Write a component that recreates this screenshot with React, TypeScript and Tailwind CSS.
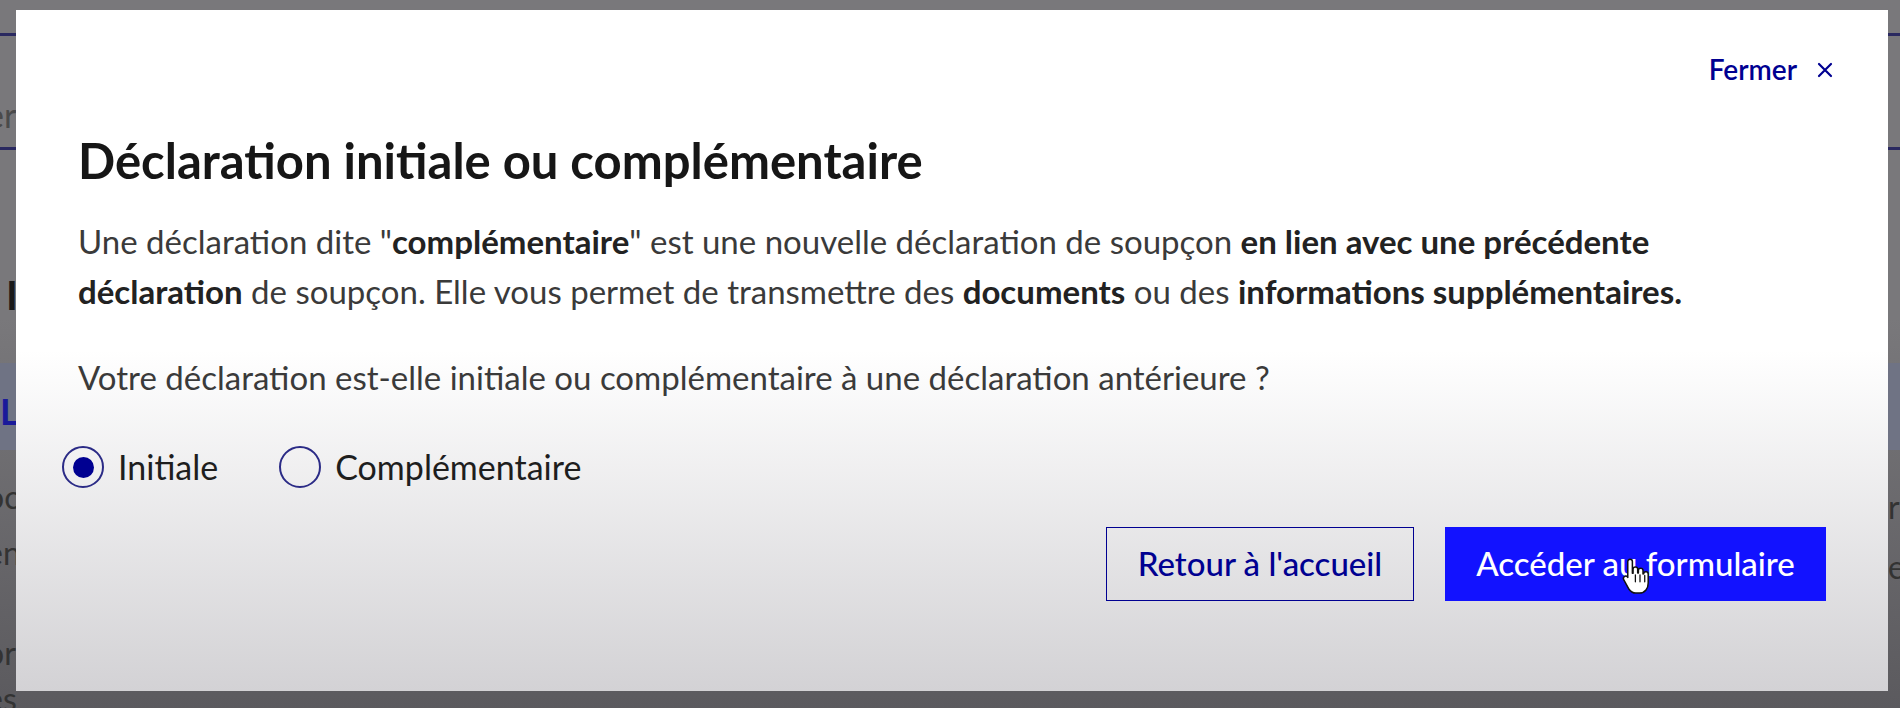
import { useState } from "react";

function HandCursor() {
  return (
    <svg width="30" height="40" viewBox="0 0 26 34" className="pointer-events-none absolute left-[1622px] top-[556px]">
      <path
        d="M7 2.5c1.2 0 2 .9 2 2v10.2l.6-.1V11c0-1.1.9-1.9 2-1.9s2 .8 2 1.9v3.5l.6-.1v-2.2c0-1.1.9-1.9 2-1.9s2 .8 2 1.9v3l.6-.1c0-1 .9-1.8 1.9-1.8s2 .8 2 1.9v7.8c0 4.6-2.6 8.8-7.6 8.8h-3.2c-2.6 0-4.4-1.2-5.8-3.3L1.6 20.3c-.6-1-.4-2.2.5-2.8.9-.6 2.1-.4 2.8.5l.1.2V4.5c0-1.1.8-2 2-2z"
        fill="#fff"
        stroke="#111"
        strokeWidth="1.3"
        strokeLinejoin="round"
      />
      <path d="M11.6 16v6M15.6 16v6M19.7 16.5v5.5" stroke="#111" strokeWidth="1.1" strokeLinecap="round" />
    </svg>
  );
}

function Radio({ checked, label, onClick }: { checked: boolean; label: string; onClick: () => void }) {
  return (
    <label className="flex cursor-pointer items-center gap-[14px]" onClick={onClick}>
      <span className="flex h-[42px] w-[42px] items-center justify-center rounded-full border-2 border-[#2b2b86]">
        {checked && <span className="h-[21px] w-[21px] rounded-full bg-[#000091]" />}
      </span>
      <span className="text-[34px] leading-[42px] text-[#1e1e1e]">{label}</span>
    </label>
  );
}

export default function App() {
  const [choice, setChoice] = useState<"initiale" | "complementaire">("initiale");

  return (
    <div className="relative h-[708px] w-[1900px] overflow-hidden bg-linear-to-b from-[#79787b] from-45% to-[#5b5a5e] font-['Lato',sans-serif]">
      {/* page behind the modal, only its edges show */}
      <div className="flex flex-col pt-[33px] text-[#333]">
        <div className="h-[3px] w-full bg-[#2a2960]" />
        <div className="-ml-[14px] h-[111px] pt-[62px] text-[34px] leading-[34px] text-[#4a4a4a]">er</div>
        <div className="h-[3px] w-full bg-[#2a2960]" />
        <div className="mt-[125px] ml-[6px] text-[40px] font-bold leading-[40px] text-[#1a1a1a]">I</div>
        <div className="mt-[48px] h-[87px] bg-[#6f7384] pt-[30px] text-[36px] font-bold leading-[36px] text-[#1a1a9a]">
          L
        </div>
        <div className="mt-[24px] flex justify-between text-[32px] leading-[46px] text-[#333]">
          <span className="-ml-[14px]">oc</span>
          <span className="mr-[-6px] mt-[10px] w-[18px]">r</span>
        </div>
        <div className="flex justify-between text-[32px] leading-[46px] text-[#333]">
          <span className="-ml-[14px]">en</span>
          <span className="mr-[-6px] mt-[14px] w-[18px]">e</span>
        </div>
        <div className="-ml-[14px] mt-[40px] text-[32px] leading-[46px] text-[#333]">or</div>
        <div className="-ml-[14px] text-[32px] leading-[46px] text-[#333]">es</div>
      </div>

      {/* modal */}
      <div className="absolute left-4 top-[10px] flex h-[681px] w-[1872px] flex-col bg-linear-to-b from-white from-50% to-[#d3d2d5] px-[62px]">
        <div className="-mr-[7px] flex justify-end pt-[44px]">
          <button className="flex items-center gap-[20px] text-[28px] font-semibold leading-[30px] text-[#000091]">
            Fermer
            <svg width="16" height="16" viewBox="0 0 16 16" className="mt-[2px]">
              <path d="M2 2l12 12M14 2L2 14" stroke="#000091" strokeWidth="2.2" strokeLinecap="round" />
            </svg>
          </button>
        </div>

        <h1 className="mt-[48px] text-[49px] font-bold leading-[56px] text-[#161616]">
          Déclaration initiale ou complémentaire
        </h1>

        <p className="mt-[28px] text-[33px] leading-[50px] text-[#3a3a3a]">
          Une déclaration dite "<b className="font-bold text-[#222]">complémentaire</b>" est une nouvelle déclaration de soupçon{" "}
          <b className="font-bold text-[#222]">en lien avec une précédente</b>
          <br />
          <b className="font-bold text-[#222]">déclaration</b> de soupçon. Elle vous permet de transmettre des{" "}
          <b className="font-bold text-[#222]">documents</b> ou des{" "}
          <b className="font-bold text-[#222]">informations supplémentaires.</b>
        </p>

        <p className="mt-[36px] text-[33px] leading-[50px] text-[#3a3a3a]">
          Votre déclaration est-elle initiale ou complémentaire à une déclaration antérieure ?
        </p>

        <div className="-ml-[16px] mt-[44px] flex items-center gap-[61px]">
          <Radio checked={choice === "initiale"} label="Initiale" onClick={() => setChoice("initiale")} />
          <Radio
            checked={choice === "complementaire"}
            label="Complémentaire"
            onClick={() => setChoice("complementaire")}
          />
        </div>

        <div className="mt-[39px] flex justify-end gap-[31px]">
          <button className="h-[74px] w-[308px] border-[1.5px] border-[#000091] text-[33px] font-medium text-[#000091]">
            Retour à l'accueil
          </button>
          <button className="h-[74px] w-[381px] bg-[#1212ff] text-[33px] font-medium text-white">
            Accéder au formulaire
          </button>
        </div>
      </div>

      <HandCursor />
    </div>
  );
}
